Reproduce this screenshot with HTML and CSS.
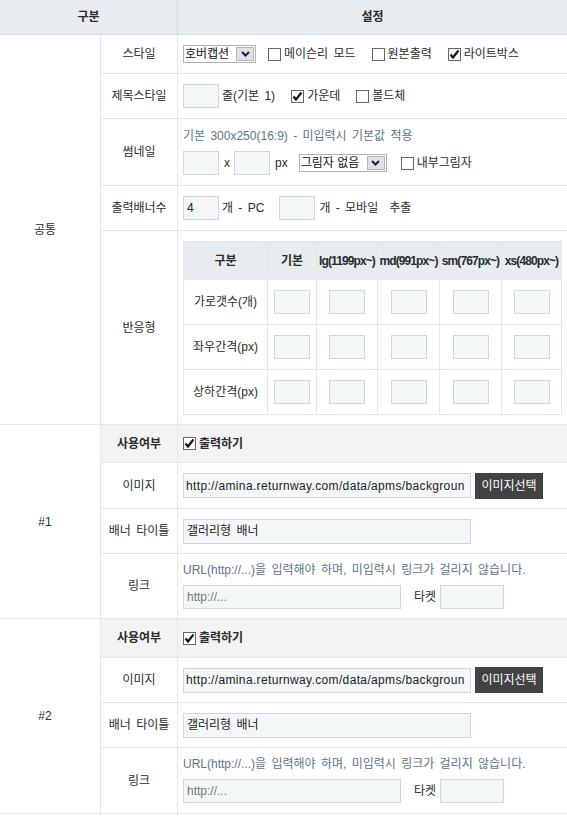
FILE: index.html
```html
<!DOCTYPE html>
<html lang="ko">
<head>
<meta charset="utf-8">
<title>배너 설정</title>
<link rel="stylesheet" href="styles.css">
</head>
<body>
<div class="form">
  <div class="th th-group">구분</div>
  <div class="th th-set">설정</div>

  <div class="grp grp-common">공통</div>
  <div class="lbl">스타일</div>
  <div class="val">
    <span class="sel sel-hover"><span class="sel-text">호버캡션</span><span class="sel-btn"><svg width="9" height="6" viewBox="0 0 9 6"><polyline points="1,1 4.5,4.5 8,1" fill="none" stroke="#14204a" stroke-width="2"/></svg></span></span>
    <label class="chk first"><span class="box"></span>메이슨리 모드</label>
    <label class="chk"><span class="box"></span>원본출력</label>
    <label class="chk"><span class="box on"><svg width="11" height="11" viewBox="0 0 11 11"><polyline points="1.5,5.5 4,8.5 9.5,1.5" fill="none" stroke="#111" stroke-width="2.2"/></svg></span>라이트박스</label>
  </div>

  <div class="lbl">제목스타일</div>
  <div class="val">
    <span class="inp w36"></span>
    <span class="txt t-line">줄(기본 1)</span>
    <label class="chk"><span class="box on"><svg width="11" height="11" viewBox="0 0 11 11"><polyline points="1.5,5.5 4,8.5 9.5,1.5" fill="none" stroke="#111" stroke-width="2.2"/></svg></span>가운데</label>
    <label class="chk"><span class="box"></span>볼드체</label>
  </div>

  <div class="lbl">썸네일</div>
  <div class="val stack">
    <div class="help">기본 300x250(16:9) - 미입력시 기본값 적용</div>
    <div class="line">
      <span class="inp w36"></span>
      <span class="txt t-x">x</span>
      <span class="inp w36"></span>
      <span class="txt t-px">px</span>
      <span class="sel sel-shadow"><span class="sel-text">그림자 없음</span><span class="sel-btn"><svg width="9" height="6" viewBox="0 0 9 6"><polyline points="1,1 4.5,4.5 8,1" fill="none" stroke="#14204a" stroke-width="2"/></svg></span></span>
      <label class="chk after-sel"><span class="box"></span>내부그림자</label>
    </div>
  </div>

  <div class="lbl">출력배너수</div>
  <div class="val">
    <span class="inp w36">4</span>
    <span class="txt t-pc">개 - PC</span>
    <span class="inp w36"></span>
    <span class="txt t-mo">개 - 모바일</span>
    <span class="txt t-ext">추출</span>
  </div>

  <div class="lbl">반응형</div>
  <div class="val resp-cell">
    <div class="resp">
      <div class="rh">구분</div>
      <div class="rh">기본</div>
      <div class="rh tight">lg(1199px~)</div>
      <div class="rh tight">md(991px~)</div>
      <div class="rh tight">sm(767px~)</div>
      <div class="rh tight">xs(480px~)</div>

      <div class="rl">가로갯수(개)</div>
      <div class="rc"><span class="inp w36"></span></div>
      <div class="rc"><span class="inp w36"></span></div>
      <div class="rc"><span class="inp w36"></span></div>
      <div class="rc"><span class="inp w36"></span></div>
      <div class="rc"><span class="inp w36"></span></div>

      <div class="rl">좌우간격(px)</div>
      <div class="rc"><span class="inp w36"></span></div>
      <div class="rc"><span class="inp w36"></span></div>
      <div class="rc"><span class="inp w36"></span></div>
      <div class="rc"><span class="inp w36"></span></div>
      <div class="rc"><span class="inp w36"></span></div>

      <div class="rl">상하간격(px)</div>
      <div class="rc"><span class="inp w36"></span></div>
      <div class="rc"><span class="inp w36"></span></div>
      <div class="rc"><span class="inp w36"></span></div>
      <div class="rc"><span class="inp w36"></span></div>
      <div class="rc"><span class="inp w36"></span></div>
    </div>
  </div>

  <div class="grp grp-item">#1</div>
  <div class="lbl use bold">사용여부</div>
  <div class="val use">
    <label class="chk zero bold"><span class="box on"><svg width="11" height="11" viewBox="0 0 11 11"><polyline points="1.5,5.5 4,8.5 9.5,1.5" fill="none" stroke="#111" stroke-width="2.2"/></svg></span>출력하기</label>
  </div>
  <div class="lbl">이미지</div>
  <div class="val">
    <span class="inp w-url url">http://amina.returnway.com/data/apms/backgroun</span>
    <span class="btn">이미지선택</span>
  </div>
  <div class="lbl">배너 타이틀</div>
  <div class="val">
    <span class="inp w-url">갤러리형 배너</span>
  </div>
  <div class="lbl">링크</div>
  <div class="val stack link">
    <div class="help">URL(http://...)을 입력해야 하며, 미입력시 링크가 걸리지 않습니다.</div>
    <div class="line">
      <span class="inp w-link ph">http://...</span>
      <span class="txt t-target">타켓</span>
      <span class="inp w-target"></span>
    </div>
  </div>

  <div class="grp grp-item">#2</div>
  <div class="lbl use bold">사용여부</div>
  <div class="val use">
    <label class="chk zero bold"><span class="box on"><svg width="11" height="11" viewBox="0 0 11 11"><polyline points="1.5,5.5 4,8.5 9.5,1.5" fill="none" stroke="#111" stroke-width="2.2"/></svg></span>출력하기</label>
  </div>
  <div class="lbl">이미지</div>
  <div class="val">
    <span class="inp w-url url">http://amina.returnway.com/data/apms/backgroun</span>
    <span class="btn">이미지선택</span>
  </div>
  <div class="lbl">배너 타이틀</div>
  <div class="val">
    <span class="inp w-url">갤러리형 배너</span>
  </div>
  <div class="lbl">링크</div>
  <div class="val stack link">
    <div class="help">URL(http://...)을 입력해야 하며, 미입력시 링크가 걸리지 않습니다.</div>
    <div class="line">
      <span class="inp w-link ph">http://...</span>
      <span class="txt t-target">타켓</span>
      <span class="inp w-target"></span>
    </div>
  </div>

  <div class="grp"></div>
  <div class="lbl"></div>
  <div class="val"></div>
</div>
</body>
</html>
```

FILE: styles.css
```css
* { box-sizing: border-box; }

html, body {
  margin: 0;
  padding: 0;
  background: #fff;
}

body {
  font-family: "Liberation Sans", "Noto Sans CJK KR", sans-serif;
  font-size: 12px;
  line-height: 16px;
  word-spacing: 2px;
  color: #2b2b2b;
  overflow: hidden;
}

.form {
  display: grid;
  width: 567px;
  grid-template-columns: 101px 77px 389px;
  grid-template-rows: 35px 39px 45px 67px 45px 194px 38px 46px 45px 65px 39px 45px 45px 66px 40px;
}

.th {
  background: #e6ecef;
  border-bottom: 1px solid #d3dde2;
  font-weight: bold;
  display: flex;
  align-items: center;
  justify-content: center;
}

.th-group {
  grid-column: span 2;
  border-right: 1px solid #d3dde2;
}

.grp {
  border-right: 1px solid #e6e6e6;
  border-bottom: 1px solid #e6e6e6;
  display: flex;
  align-items: center;
  justify-content: center;
  padding-right: 10px;
}

.grp-common { grid-row: span 5; }
.grp-item { grid-row: span 4; }

.lbl {
  border-right: 1px solid #e6e6e6;
  border-bottom: 1px solid #e6e6e6;
  display: flex;
  align-items: center;
  justify-content: center;
  white-space: nowrap;
}

.val {
  border-bottom: 1px solid #e6e6e6;
  display: flex;
  align-items: center;
  padding-left: 5px;
  white-space: nowrap;
}

.use { background: #f3f3f3; }
.bold { font-weight: bold; }

.stack {
  flex-direction: column;
  align-items: flex-start;
  justify-content: flex-start;
  padding-top: 9px;
}

.stack.link { padding-top: 8px; }

.line {
  display: flex;
  align-items: center;
  margin-top: 7px;
}

.help {
  color: #5b7684;
  height: 16px;
}

.inp {
  display: inline-flex;
  align-items: center;
  height: 24px;
  border: 1px solid #cdd8dd;
  background: #f4f7f8;
  padding: 0 3px;
  overflow: hidden;
  white-space: nowrap;
  color: #222;
  flex: none;
}

.w36 { width: 36px; }
.w-url { width: 288px; height: 25px; }
.url { letter-spacing: 0.35px; padding-left: 2px; }
.w-link { width: 218px; height: 24px; }
.w-target { width: 64px; height: 24px; }
.ph { color: #777; }

.txt { flex: none; }
.t-line { margin-left: 3px; }
.t-x { margin-left: 5px; margin-right: 4px; }
.t-px { margin-left: 5px; margin-right: 11px; }
.t-pc { margin-left: 3px; margin-right: 15px; }
.t-mo { margin-left: 4px; }
.t-ext { margin-left: 11px; }
.t-target { margin-left: 13px; margin-right: 4px; }

.sel {
  display: inline-flex;
  align-items: center;
  height: 18px;
  border: 1px solid #aab4ba;
  background: #fff;
  padding-left: 1px;
  padding-right: 1px;
  flex: none;
}

.sel-hover { width: 73px; }
.sel-shadow { width: 88px; }

.sel-text {
  flex: 1;
  color: #111;
  word-spacing: 0;
}

.sel-btn {
  width: 18px;
  height: 14px;
  background: #e2e2e2;
  border: 1px solid #b4b4b4;
  display: flex;
  align-items: center;
  justify-content: center;
}

.chk {
  display: inline-flex;
  align-items: center;
  margin-left: 16px;
  flex: none;
}

.chk.first { margin-left: 12px; }
.chk.after-sel { margin-left: 14px; }
.chk.zero { margin-left: 0; }

.box {
  width: 13px;
  height: 13px;
  border: 1px solid #666;
  background: #fff;
  margin-right: 3px;
  display: flex;
  align-items: center;
  justify-content: center;
}

.btn {
  display: inline-flex;
  align-items: center;
  justify-content: center;
  height: 26px;
  width: 68px;
  margin-left: 4px;
  background: #424242;
  color: #fff;
  flex: none;
}

.resp-cell {
  align-items: flex-start;
  padding-top: 10px;
}

.resp {
  display: grid;
  grid-template-columns: 84px 49px 61px 62px 62px 60px;
  grid-template-rows: 38px 45px 45px 45px;
  border-left: 1px solid #e6e6e6;
  border-top: 1px solid #e6e6e6;
}

.rh, .rl, .rc {
  border-right: 1px solid #e6e6e6;
  border-bottom: 1px solid #e6e6e6;
  display: flex;
  align-items: center;
  justify-content: center;
  white-space: nowrap;
}

.rh {
  background: #e6ecef;
  font-weight: bold;
}

.rh.tight {
  letter-spacing: -0.9px;
  font-size: 12px;
  overflow: visible;
}
```
